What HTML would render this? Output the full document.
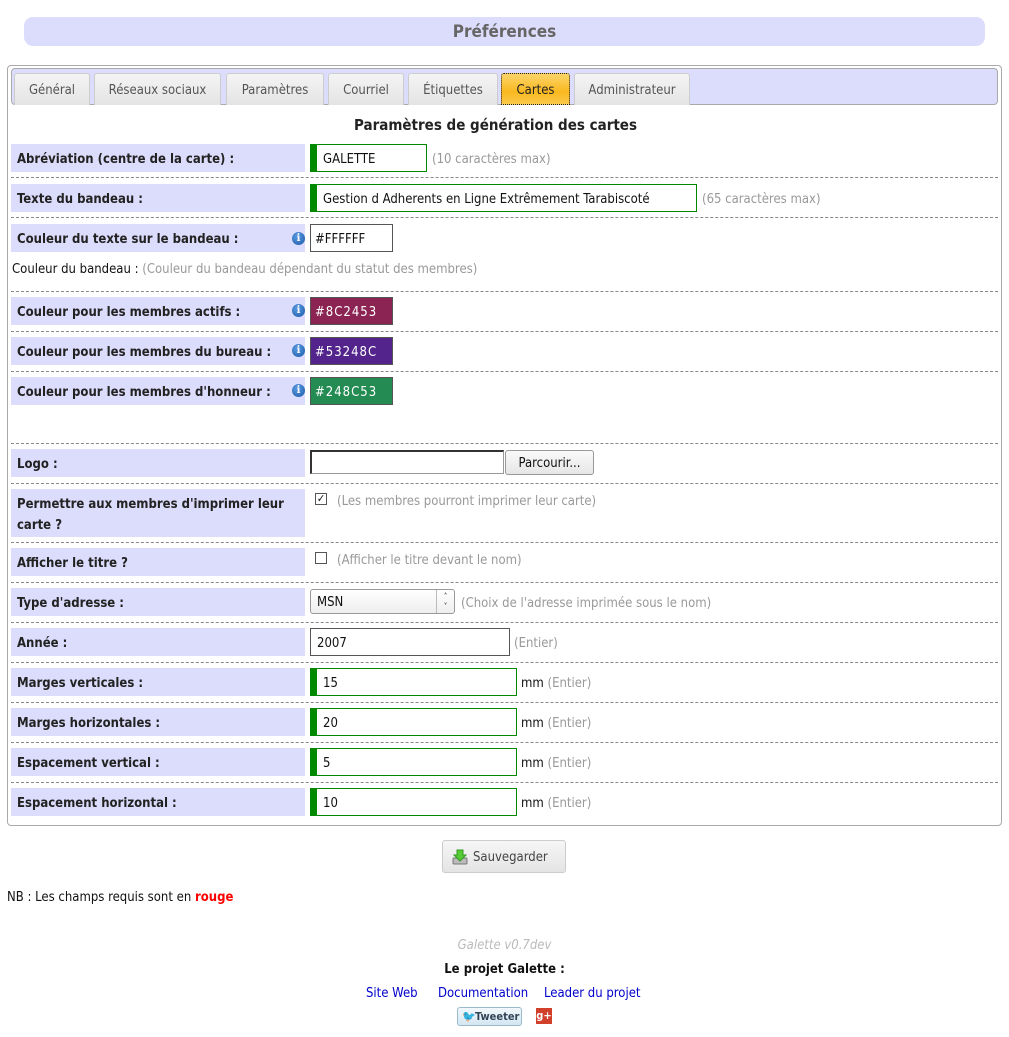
<!DOCTYPE html>
<html><head><meta charset="utf-8">
<style>
*{box-sizing:border-box;margin:0;padding:0}
body{width:1009px;height:1037px;background:#fff;font-family:"DejaVu Sans Condensed","DejaVu Sans","Liberation Sans",sans-serif;font-size:13px;color:#111;position:relative;overflow:hidden}
.a{position:absolute}
.title{left:24px;top:17px;width:961px;height:29px;background:#dcdcfc;border-radius:9px;text-align:center;line-height:31px;font-size:17px;font-weight:bold;color:#666}
.box{left:7px;top:65px;width:995px;height:761px;border:1px solid #aaa;border-radius:4px}
.tabs{left:11px;top:68px;width:987px;height:37px;background:#dcdcfc;border:1px solid #aaa;border-radius:4px}
.tab{top:73px;height:32px;border:1px solid #ccc;border-bottom:none;border-radius:3px 3px 0 0;background:linear-gradient(#f4f4f4,#e4e4e4);color:#555;text-align:center;line-height:34px;font-size:13px}
.tab.on{background:linear-gradient(#fcd56a,#f9b81f 60%,#fcc94a);border:1px dotted #222;color:#222}
.h{top:116px;text-align:center;font-weight:bold;font-size:15px;color:#222}
.lab{left:11px;width:294px;height:28px;background:#dcdcfc;font-weight:bold;color:#222;line-height:31px;padding-left:6px}
.dash{left:11px;width:987px;border-top:1px dashed #888;height:0}
.in{left:310px;height:28px;border:1px solid #080;border-left:7px solid #080;line-height:29px;padding-left:6px;color:#111;background:#fff}
.hint{color:#999;line-height:31px}
.info{width:13px;height:13px;border-radius:50%;background:radial-gradient(circle at 40% 35%,#5a9be0,#1a5aa8);color:#fff;font-size:10px;font-weight:bold;text-align:center;line-height:13px;font-family:"DejaVu Serif",serif;left:292px}
.col{left:310px;width:83px;height:28px;border:1px solid #555;color:#fff;line-height:29px;padding-left:4px;letter-spacing:1px}
a{color:#00c;text-decoration:none}
</style></head><body>
<div class="a title">Préférences</div>
<div class="a box"></div>
<div class="a tabs"></div>
<div class="a tab" style="left:14px;width:76px">Général</div>
<div class="a tab" style="left:94px;width:127px">Réseaux sociaux</div>
<div class="a tab" style="left:226px;width:98px">Paramètres</div>
<div class="a tab" style="left:328px;width:76px">Courriel</div>
<div class="a tab" style="left:408px;width:90px">Étiquettes</div>
<div class="a tab on" style="left:501px;width:69px">Cartes</div>
<div class="a tab" style="left:574px;width:116px">Administrateur</div>
<div class="a h" style="left:353px;width:285px;white-space:nowrap">Paramètres de génération des cartes</div>

<div class="a lab" style="top:144px">Abréviation (centre de la carte) :</div>
<div class="a in" style="top:144px;width:117px">GALETTE</div>
<div class="a hint" style="left:432px;top:144px">(10 caractères max)</div>
<div class="a dash" style="top:177px"></div>

<div class="a lab" style="top:184px">Texte du bandeau :</div>
<div class="a in" style="top:184px;width:387px">Gestion d Adherents en Ligne Extrêmement Tarabiscoté</div>
<div class="a hint" style="left:702px;top:184px">(65 caractères max)</div>
<div class="a dash" style="top:217px"></div>

<div class="a lab" style="top:224px">Couleur du texte sur le bandeau :</div>
<div class="a info" style="top:232px">i</div>
<div class="a col" style="top:224px;background:#fff;color:#111;letter-spacing:0">#FFFFFF</div>
<div class="a" style="left:12px;top:262px">Couleur du bandeau : <span style="color:#999">(Couleur du bandeau dépendant du statut des membres)</span></div>
<div class="a dash" style="top:291px"></div>

<div class="a lab" style="top:297px">Couleur pour les membres actifs :</div>
<div class="a info" style="top:304px">i</div>
<div class="a col" style="top:297px;background:#8C2453">#8C2453</div>
<div class="a dash" style="top:331px"></div>
<div class="a lab" style="top:337px">Couleur pour les membres du bureau :</div>
<div class="a info" style="top:344px">i</div>
<div class="a col" style="top:337px;background:#53248C">#53248C</div>
<div class="a dash" style="top:371px"></div>
<div class="a lab" style="top:377px">Couleur pour les membres d'honneur :</div>
<div class="a info" style="top:384px">i</div>
<div class="a col" style="top:377px;background:#248C53">#248C53</div>
<div class="a dash" style="top:443px"></div>

<div class="a lab" style="top:449px">Logo :</div>
<div class="a" style="left:310px;top:450px;width:194px;height:24px;border:1px solid #999;border-top:2px solid #333;border-left:2px solid #333"></div>
<div class="a" style="left:505px;top:450px;width:89px;height:25px;border:1px solid #999;border-radius:3px;background:linear-gradient(#fafafa,#e6e6e6);text-align:center;line-height:25px">Parcourir...</div>
<div class="a dash" style="top:483px"></div>

<div class="a lab" style="top:489px;height:48px;line-height:21px;padding-top:5px">Permettre aux membres d'imprimer leur<br>carte ?</div>
<div class="a" style="left:315px;top:493px;width:12px;height:12px;border:1px solid #555;font-size:11px;line-height:10px;text-align:center">✓</div>
<div class="a hint" style="left:337px;top:486px">(Les membres pourront imprimer leur carte)</div>
<div class="a dash" style="top:542px"></div>

<div class="a lab" style="top:548px">Afficher le titre ?</div>
<div class="a" style="left:315px;top:552px;width:12px;height:12px;border:1px solid #555"></div>
<div class="a hint" style="left:337px;top:545px">(Afficher le titre devant le nom)</div>
<div class="a dash" style="top:582px"></div>

<div class="a lab" style="top:588px">Type d'adresse :</div>
<div class="a" style="left:310px;top:589px;width:145px;height:25px;border:1px solid #999;border-radius:3px;background:linear-gradient(#fff,#eee);line-height:26px;padding-left:6px">MSN<span class="a" style="right:0;top:0;width:18px;height:23px;border-left:1px solid #bbb;text-align:center;font-size:8px;line-height:10px;padding-top:2px">˄<br>˅</span></div>
<div class="a hint" style="left:461px;top:588px">(Choix de l'adresse imprimée sous le nom)</div>
<div class="a dash" style="top:622px"></div>

<div class="a lab" style="top:628px">Année :</div>
<div class="a" style="left:310px;top:628px;width:200px;height:28px;border:1px solid #555;line-height:29px;padding-left:6px">2007</div>
<div class="a hint" style="left:514px;top:628px">(Entier)</div>
<div class="a dash" style="top:662px"></div>

<div class="a lab" style="top:668px">Marges verticales :</div>
<div class="a in" style="top:668px;width:207px">15</div>
<div class="a" style="left:521px;top:668px;line-height:31px">mm <span style="color:#999">(Entier)</span></div>
<div class="a dash" style="top:702px"></div>
<div class="a lab" style="top:708px">Marges horizontales :</div>
<div class="a in" style="top:708px;width:207px">20</div>
<div class="a" style="left:521px;top:708px;line-height:31px">mm <span style="color:#999">(Entier)</span></div>
<div class="a dash" style="top:742px"></div>
<div class="a lab" style="top:748px">Espacement vertical :</div>
<div class="a in" style="top:748px;width:207px">5</div>
<div class="a" style="left:521px;top:748px;line-height:31px">mm <span style="color:#999">(Entier)</span></div>
<div class="a dash" style="top:782px"></div>
<div class="a lab" style="top:788px">Espacement horizontal :</div>
<div class="a in" style="top:788px;width:207px">10</div>
<div class="a" style="left:521px;top:788px;line-height:31px">mm <span style="color:#999">(Entier)</span></div>

<div class="a" style="left:442px;top:840px;width:124px;height:33px;border:1px solid #ccc;border-radius:3px;background:linear-gradient(#f6f6f6,#e4e4e4);line-height:33px;padding-left:30px;color:#444;font-size:13px">Sauvegarder
<svg class="a" style="left:9px;top:8px" width="16" height="16" viewBox="0 0 16 16"><rect x="1" y="9" width="14" height="6" rx="1" fill="#bbb" stroke="#777"/><path d="M5 1h6v5h3l-6 6-6-6h3z" fill="#5c3" stroke="#392"/></svg></div>

<div class="a" style="left:7px;top:890px">NB : Les champs requis sont en <b style="color:#f00">rouge</b></div>
<div class="a" style="left:0;width:1009px;top:938px;text-align:center;color:#bbb;font-style:italic">Galette v0.7dev</div>
<div class="a" style="left:0;width:1009px;top:962px;text-align:center;font-weight:bold">Le projet Galette :</div>
<div class="a" style="left:366px;top:986px;white-space:nowrap"><a>Site Web</a></div>
<div class="a" style="left:438px;top:986px;white-space:nowrap"><a>Documentation</a></div>
<div class="a" style="left:544px;top:986px;white-space:nowrap"><a>Leader du projet</a></div>
<div class="a" style="left:457px;top:1007px;width:65px;height:19px;border:1px solid #9bc;border-radius:3px;background:linear-gradient(#f2f8fc,#d4e6f2);font-size:11px;font-weight:bold;color:#345;line-height:17px;padding-left:17px"><span class="a" style="left:4px;color:#3a8fd0">🐦</span>Tweeter</div>
<div class="a" style="left:536px;top:1008px;width:16px;height:16px;background:#d1402a;color:#fff;font-size:11px;font-weight:bold;text-align:center;line-height:16px">g+</div>
</body></html>
